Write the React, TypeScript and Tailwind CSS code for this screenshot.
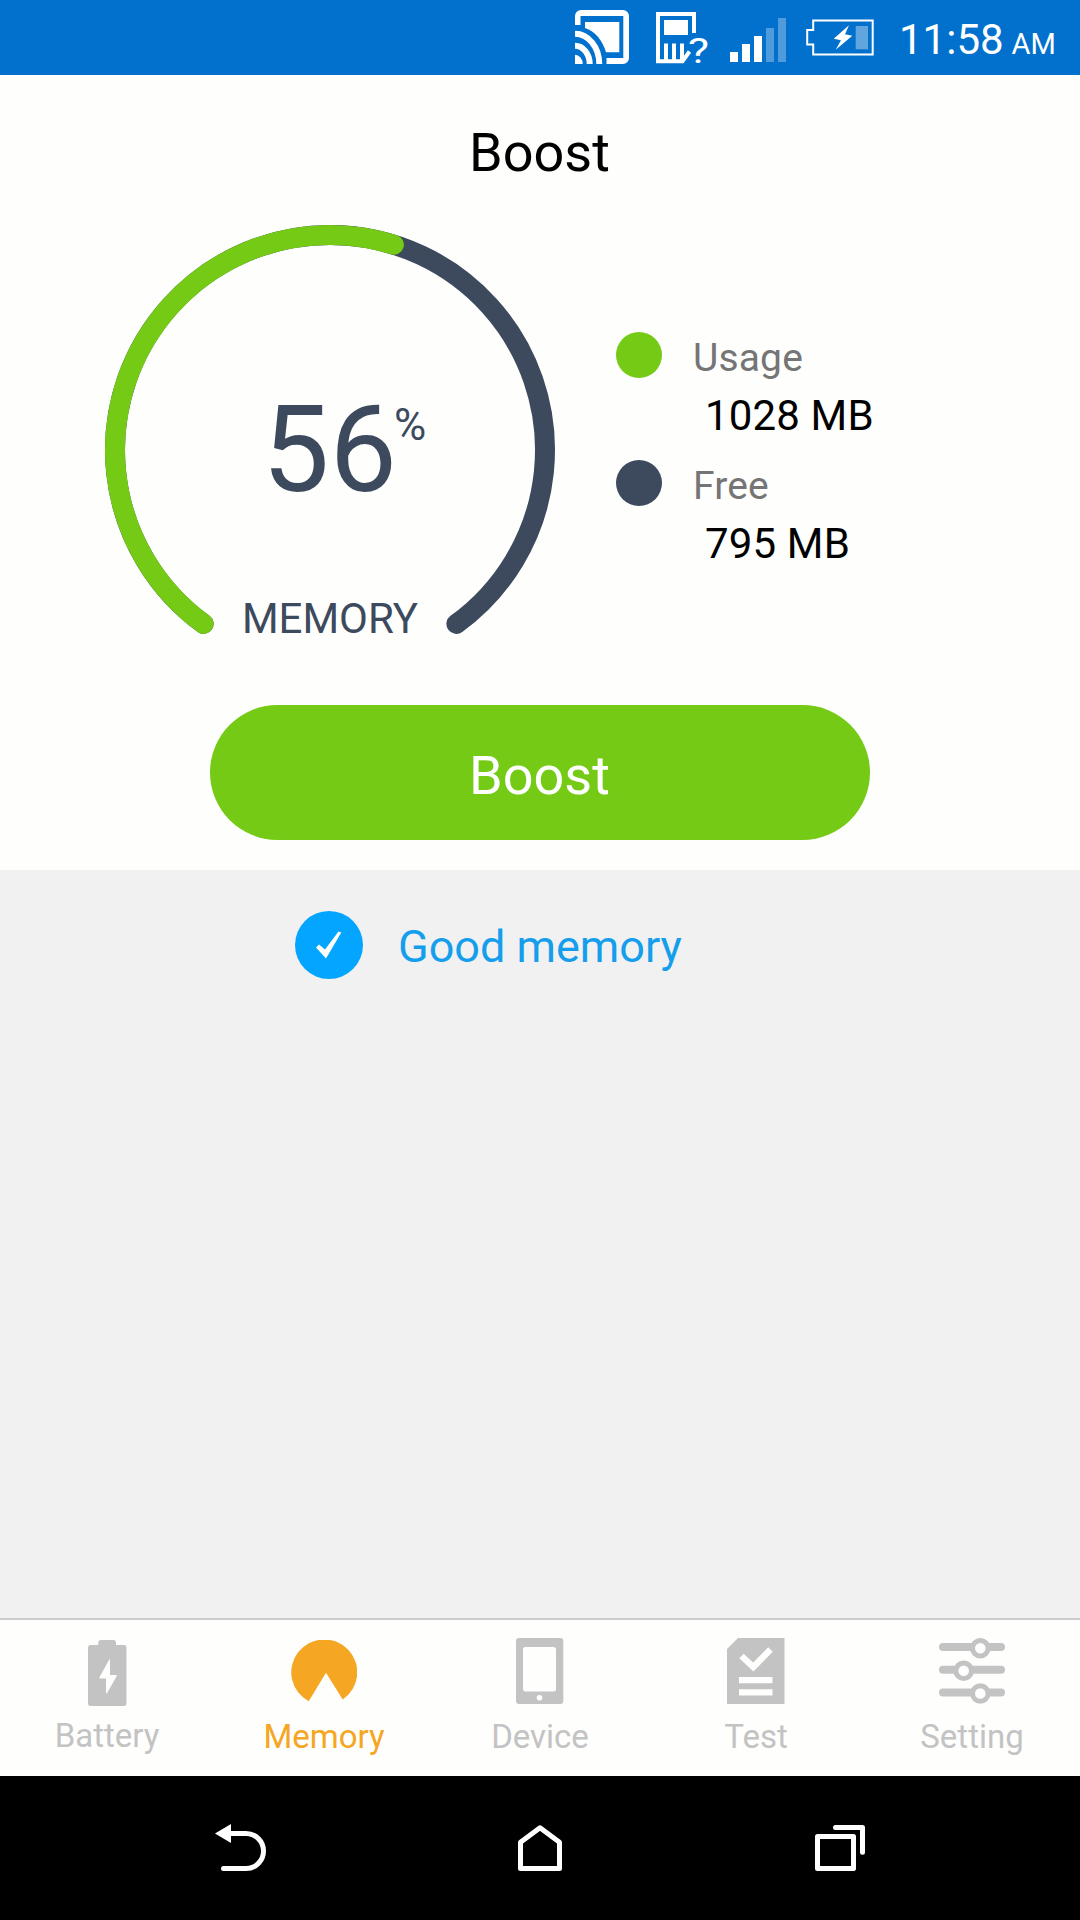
import clsx from "clsx";

const GAUGE_RADIUS = 215;
const GAUGE_START = 126;
const GAUGE_SWEEP = 288;

const gaugeArc = (percent: number) => {
  const point = (angle: number) => {
    const rad = (angle * Math.PI) / 180;
    return `${226 + GAUGE_RADIUS * Math.cos(rad)} ${
      226 + GAUGE_RADIUS * Math.sin(rad)
    }`;
  };
  const sweep = (GAUGE_SWEEP * percent) / 100;
  return `M${point(GAUGE_START)} A${GAUGE_RADIUS} ${GAUGE_RADIUS} 0 ${
    sweep > 180 ? 1 : 0
  } 1 ${point(GAUGE_START + sweep)}`;
};

const CastIcon = () => (
  <svg className="h-[75px] w-[54px]" viewBox="0 0 54 75" fill="none">
    <path
      d="M0 25V16a6 6 0 0 1 6-6H48a6 6 0 0 1 6 6V58a6 6 0 0 1-6 6H31.5V58H48.3V16H5.5V25Z"
      fill="#fff"
    />
    <path d="M10 22H44.3V52.3H31C28 41 20 31 10 28Z" fill="#fff" />
    <path
      d="M0 33.7A24.3 30.3 0 0 1 24.3 64M0 45.7A14.7 18.3 0 0 1 14.7 64"
      stroke="#fff"
      strokeWidth="6"
    />
    <path d="M0 54.7A7.7 9.3 0 0 1 7.7 64H0Z" fill="#fff" />
  </svg>
);

const UnknownSimIcon = () => (
  <svg
    className="ml-[27px] h-[75px] w-[54px]"
    viewBox="0 0 54 75"
    fill="none"
  >
    <path
      d="M38 33V14H2V61.3H26.5L33.5 51.5"
      stroke="#fff"
      strokeWidth="4"
    />
    <path d="M8 20H32V35H8Z" fill="#fff" />
    <path d="M10 43.5V61M18 43.5V61M26 43.5V61" stroke="#fff" strokeWidth="4" />
    <text
      x="32"
      y="63"
      textLength="21"
      lengthAdjust="spacingAndGlyphs"
      fill="#fff"
      className="font-['Roboto',sans-serif] text-[35px] font-normal"
    >
      ?
    </text>
  </svg>
);

const SignalIcon = () => (
  <svg className="ml-[20px] h-[75px] w-[56px]" viewBox="0 0 56 75">
    <path d="M0 52H8V62H0ZM12 44H20V62H12ZM24 36H32V62H24Z" fill="#fff" />
    <path d="M36 28H44V62H36ZM48 18H56V62H48Z" fill="#4f9bdb" />
  </svg>
);

const ChargingIcon = () => (
  <svg
    className="ml-[20px] h-[75px] w-[68px]"
    viewBox="0 0 68 75"
    fill="none"
  >
    <path d="M7.2 20.5H66.7V54.5H7.2V44.5H1.2V30H7.2Z" stroke="#fff" strokeWidth="2" />
    <path
      d="M43 25.3L27.7 38.7L35 40.3L29.7 49.7L46.3 35.7L39 34.3Z"
      fill="#fff"
    />
    <path d="M49.7 26H62V49.3H49.7Z" fill="#61a5df" />
  </svg>
);

const BatteryIcon = () => (
  <svg className="h-[66px] w-[39px]" viewBox="0 0 39 66">
    <path
      d="M13 0H25.5Q28 0 28 3V5H36Q38.5 5 38.5 8V63Q38.5 66 36 66H2.5Q0 66 0 63V8Q0 5 2.5 5H10.3V3Q10.3 0 13 0Z"
      fill="currentColor"
    />
    <path
      d="M21.5 19.3L11.5 37V38.5H18V53.3H19L28.5 36.5V35H22V19.3Z"
      fill="#fefefd"
    />
  </svg>
);

const MemoryIcon = () => (
  <svg className="h-[66px] w-[66px]" viewBox="0 0 66 66">
    <path
      d="M35 32.8L17.7 61.2A33 32.8 0 1 1 51.7 59.5Z"
      fill="currentColor"
    />
  </svg>
);

const DeviceIcon = () => (
  <svg className="h-[66px] w-[48px]" viewBox="0 0 48 66">
    <rect width="47.3" height="66" rx="3" fill="currentColor" />
    <rect x="7" y="9" width="33" height="44.5" rx="2.5" fill="#fefefd" />
    <circle cx="23.5" cy="59.7" r="2.8" fill="#fefefd" />
  </svg>
);

const TestIcon = () => (
  <svg className="h-[66px] w-[58px]" viewBox="0 0 58 66" fill="none">
    <path d="M11 0H57.5V66H0V11Z" fill="currentColor" />
    <path
      d="M14.5 18L26.3 29L43.5 11.5"
      stroke="#fefefd"
      strokeWidth="6.4"
    />
    <path d="M12 39H45.5V45.3H12ZM12 51.2H45.5V57.4H12Z" fill="#fefefd" />
  </svg>
);

const SettingIcon = () => (
  <svg
    className="h-[66px] w-[66px]"
    viewBox="0 0 66 66"
    stroke="currentColor"
    fill="#fefefd"
  >
    <path
      d="M4 9H62M4 31.8H62M4 54.5H62"
      strokeWidth="8"
      strokeLinecap="round"
    />
    <circle cx="41.3" cy="10.3" r="7.8" strokeWidth="5" />
    <circle cx="24.7" cy="32.8" r="7.8" strokeWidth="5" />
    <circle cx="41.3" cy="55.5" r="7.8" strokeWidth="5" />
  </svg>
);

const StatusBar = () => (
  <header className="flex h-[75px] bg-[#0171cd] pl-[575px] text-white">
    <CastIcon />
    <UnknownSimIcon />
    <SignalIcon />
    <ChargingIcon />
    <div className="ml-[25px] flex items-baseline whitespace-nowrap">
      <span className="text-[42px] leading-[79px]">11:58</span>
      <span className="ml-[8px] text-[29px]">AM</span>
    </div>
  </header>
);

const Gauge = ({ percent }: { percent: number }) => (
  <div className="relative h-[452px] w-[452px] shrink-0 text-[#3d4a5d]">
    <svg
      className="h-full w-full"
      viewBox="0 0 452 452"
      fill="none"
      strokeWidth="20"
      strokeLinecap="round"
    >
      <path d={gaugeArc(100)} stroke="#3d4a5d" />
      <path d={gaugeArc(percent)} stroke="#74ca15" />
    </svg>
    <div className="absolute top-[156px] left-[158px] flex items-start">
      <span className="text-[120px] leading-[140px]">{percent}</span>
      <span className="-ml-[3px] mt-[19px] text-[44px] leading-[52px]">%</span>
    </div>
    <span className="absolute top-[369px] left-0 w-full text-center text-[42px] leading-[52px]">
      MEMORY
    </span>
  </div>
);

interface LegendItemProps {
  label: string;
  value: string;
  dotClassName: string;
}

const LegendItem: React.FC<LegendItemProps> = (props) => (
  <div className="flex h-[128px]">
    <div className={clsx(`h-[46px] w-[46px] rounded-full`, props.dotClassName)} />
    <div className="ml-[31px] flex flex-col whitespace-nowrap">
      <span className="text-[39px] leading-[52px] tracking-[0.15px] text-[#757575]">
        {props.label}
      </span>
      <span className="ml-[12px] mt-[6px] text-[42px] leading-[52px] tracking-[0.15px] text-black">
        {props.value}
      </span>
    </div>
  </div>
);

const TABS = [
  { label: `Battery`, icon: BatteryIcon, className: `pt-[20px] pb-[20px] pr-[2px]` },
  { label: `Memory`, icon: MemoryIcon, className: `pt-[20px] pb-[19px]`, active: true },
  { label: `Device`, icon: DeviceIcon, className: `pt-[18px] pb-[19px]` },
  { label: `Test`, icon: TestIcon, className: `pt-[18px] pb-[19px]` },
  { label: `Setting`, icon: SettingIcon, className: `pt-[18px] pb-[19px]` },
];

const TabBar = () => (
  <nav className="grid h-[158px] grid-cols-5 border-t-2 border-[#cccccc] bg-[#fefefd]">
    {TABS.map(({ label, icon: Icon, className, active }) => (
      <div
        key={label}
        className={clsx(
          `flex flex-col items-center justify-between`,
          active ? `text-[#f5a623]` : `text-[#c3c3c3]`,
          className,
        )}
      >
        <Icon />
        <span className="text-[33px] leading-[40px]">{label}</span>
      </div>
    ))}
  </nav>
);

const SystemNav = () => (
  <footer className="flex h-[144px] items-center justify-between bg-black px-[210px]">
    <svg className="h-[60px] w-[60px]" viewBox="210 1818 60 60" fill="none">
      <path
        d="M229 1833.5H246A17.5 17.5 0 0 1 246 1868.5H223.5"
        stroke="#fff"
        strokeWidth="5"
        strokeLinecap="round"
      />
      <path d="M215 1833.5L231 1824V1843Z" fill="#fff" />
    </svg>
    <svg className="h-[60px] w-[60px]" viewBox="510 1818 60 60" fill="none">
      <path
        d="M520.5 1868.5V1842.3L540 1827.7L559.5 1842.3V1868.5Z"
        stroke="#fff"
        strokeWidth="5"
        strokeLinejoin="round"
      />
    </svg>
    <svg className="h-[60px] w-[60px]" viewBox="810 1818 60 60" fill="none">
      <path
        d="M817.5 1836.5H853.5V1868.5H817.5ZM835.5 1827.5H862.5V1852.3"
        stroke="#fff"
        strokeWidth="5"
        strokeLinecap="round"
        strokeLinejoin="round"
      />
    </svg>
  </footer>
);

const App = () => (
  <div className="flex h-[1920px] w-[1080px] flex-col overflow-hidden bg-[#f1f1f1] font-['Roboto',sans-serif]">
    <StatusBar />
    <section className="flex h-[795px] flex-col items-center bg-[#fefefd]">
      <h1 className="mt-[46px] pr-px text-[54px] leading-[64px] text-black">
        Boost
      </h1>
      <div className="mt-[39px] flex w-full pl-[104px]">
        <Gauge percent={56} />
        <div className="mt-[108px] ml-[60px]">
          <LegendItem
            label="Usage"
            value="1028 MB"
            dotClassName="bg-[#74ca15]"
          />
          <LegendItem label="Free" value="795 MB" dotClassName="bg-[#3d4a5d]" />
        </div>
      </div>
      <button className="mt-[29px] h-[135px] w-[660px] rounded-full bg-[#74ca15] pt-[6px] pr-px text-[54px] leading-[64px] text-white">
        Boost
      </button>
    </section>
    <main className="flex flex-1 items-start pt-[41px] pl-[295px]">
      <svg className="h-[68px] w-[68px]" viewBox="0 0 68 68">
        <circle cx="34" cy="34" r="34" fill="#03a5ff" />
        <path
          d="M21 36.5L24 33.5L30 38.5L43.5 20.5L46.3 21.5L31 47.5Z"
          fill="#fefefd"
        />
      </svg>
      <span className="ml-[35px] text-[45px] leading-[71px] text-[#159eec]">
        Good memory
      </span>
    </main>
    <TabBar />
    <SystemNav />
  </div>
);

export default App;
